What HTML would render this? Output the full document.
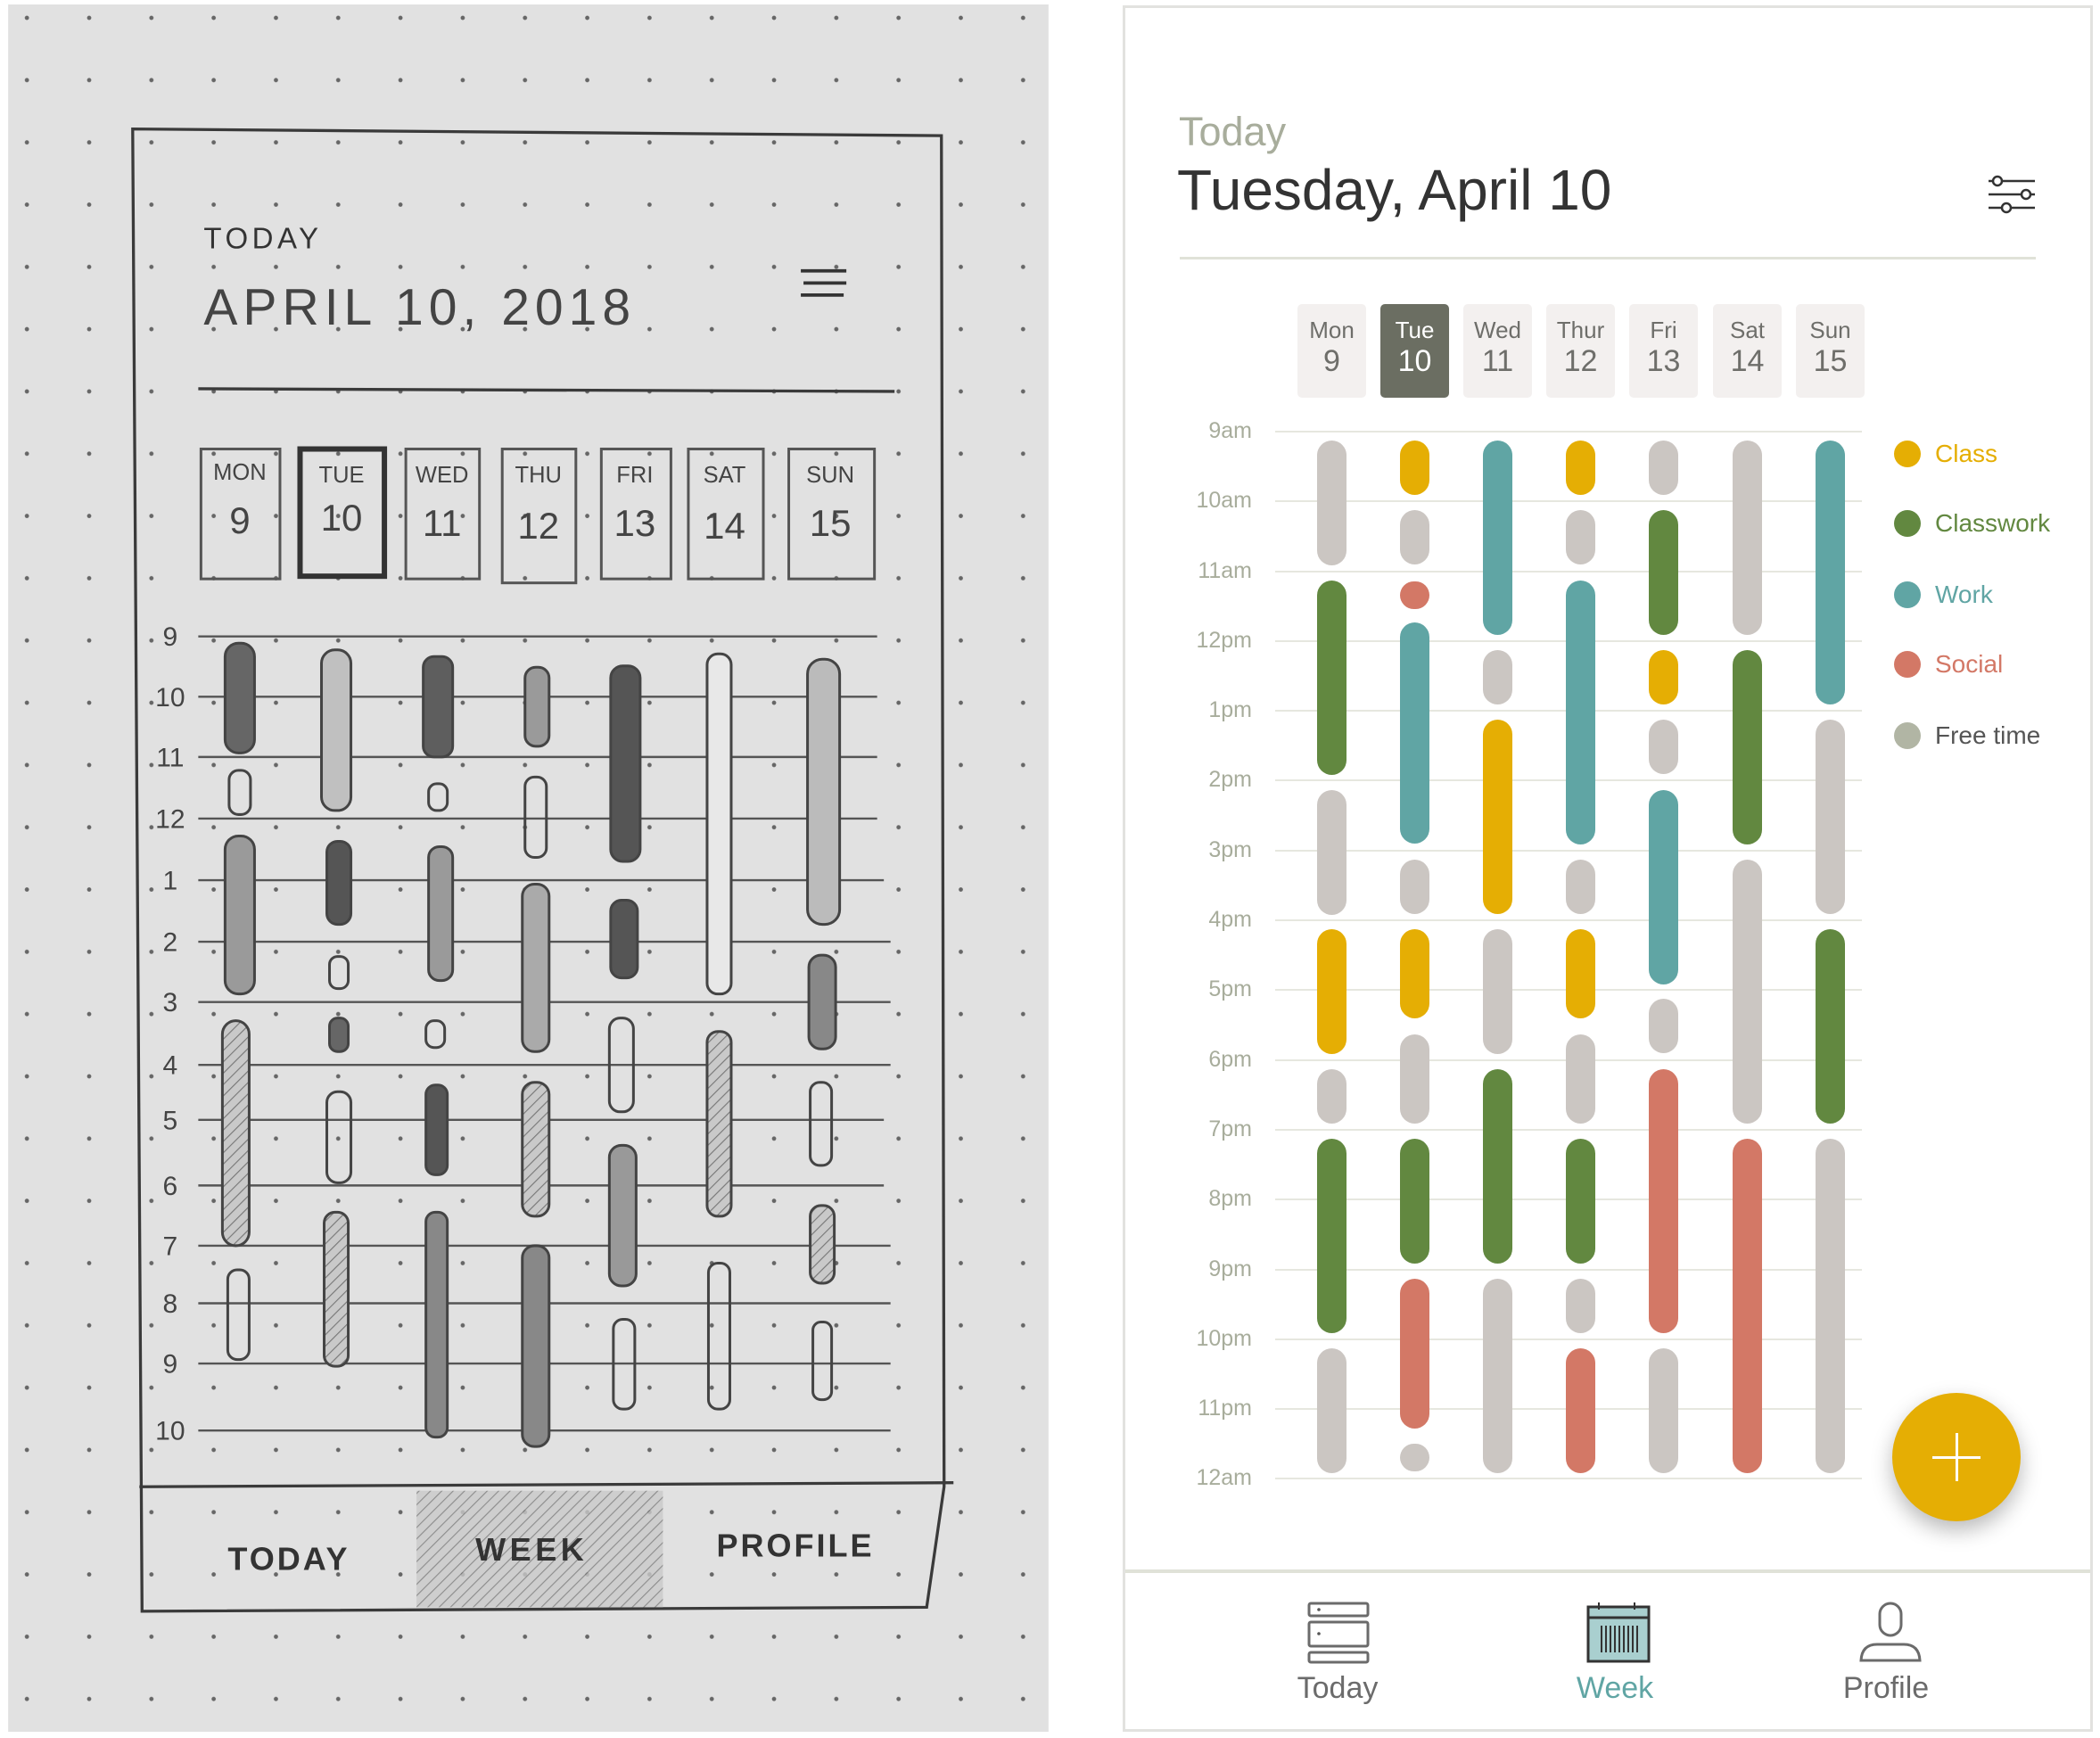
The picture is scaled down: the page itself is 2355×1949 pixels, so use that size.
<!DOCTYPE html>
<html><head><meta charset="utf-8"><style>
*{margin:0;padding:0;box-sizing:border-box}
body{width:2355px;height:1949px;position:relative;background:#fff;font-family:"Liberation Sans",sans-serif;overflow:hidden}
.a{position:absolute}
.panel{left:1259px;top:6px;width:1088px;height:1936px;border:3px solid #e2e2df}
.chip{position:absolute;top:341px;width:77px;height:105px;background:#f3f0ef;border-radius:5px;text-align:center;color:#6e6e6a}
.chip .d{font-size:26px;margin-top:14px;line-height:30px}
.chip .n{font-size:34px;line-height:40px}
.chip.on{background:#6b6e62;color:#fff}
.hl{position:absolute;left:1430px;width:658px;height:2px;background:#e6e7df}
.hr{position:absolute;right:951px;font-size:25px;color:#a8ad9c;line-height:30px;margin-top:-16px}
.b{position:absolute;width:33px;border-radius:17px}
.c1{left:1477px}.c2{left:1570px}.c3{left:1663px}.c4{left:1756px}.c5{left:1849px}.c6{left:1943px}.c7{left:2036px}
.g{background:#cbc6c2}.y{background:#e5ae04}.gr{background:#628840}.t{background:#60a5a4}.r{background:#d37866}
.lg{position:absolute;left:2124px;font-size:28px;line-height:32px}
.lg i{display:inline-block;width:30px;height:30px;border-radius:50%;vertical-align:middle;margin-right:16px;margin-top:-4px}
.nav{position:absolute;font-size:34px;top:1874px;width:300px;text-align:center;color:#6b6b6b}
</style></head><body>

<svg class="a" style="left:9px;top:5px" width="1167" height="1937" viewBox="6 3 777 1290" xmlns="http://www.w3.org/2000/svg">
<defs><pattern id="dp" x="10" y="5" width="46.5" height="46.5" patternUnits="userSpaceOnUse"><circle cx="10" cy="8" r="1.6" fill="#666"/></pattern>
<pattern id="hp" width="6" height="6" patternUnits="userSpaceOnUse" patternTransform="rotate(45)"><rect width="6" height="6" fill="#c9c9c9"/><line x1="0" y1="0" x2="0" y2="6" stroke="#777" stroke-width="1.5"/></pattern></defs>
<rect x="6" y="3" width="777" height="1290" fill="#e1e1e1"/>
<rect x="6" y="3" width="777" height="1290" fill="url(#dp)"/>
<g fill="none" stroke="#3a3a3a" stroke-width="2.2">
<path d="M99 96 L703 101 L705 1110 L692 1200 L106 1203 Z"/>
<path d="M104 1110 L712 1107"/>
<path d="M148 290 L668 292"/>
</g>
<rect x="311" y="1113" width="184" height="87" fill="url(#hp)" opacity=".8"/>
<g font-family="Liberation Sans" fill="#333">
<text x="152" y="185" font-size="22" letter-spacing="3">TODAY</text>
<text x="152" y="242" font-size="38" letter-spacing="4" fill="#444">APRIL 10, 2018</text>
<text x="170" y="1172" font-size="24" font-weight="bold" letter-spacing="2">TODAY</text>
<text x="355" y="1165" font-size="24" font-weight="bold" letter-spacing="3">WEEK</text>
<text x="535" y="1162" font-size="24" font-weight="bold" letter-spacing="2">PROFILE</text>
</g>
<g stroke="#333" stroke-width="2.5"><path d="M598 202h34M600 211h32M598 220h32"/></g>
<g fill="none" stroke="#555" stroke-width="2">
<rect x="150" y="335" width="59" height="97"/><rect x="224" y="335" width="63" height="95" stroke-width="4" stroke="#333"/>
<rect x="303" y="335" width="55" height="97"/><rect x="375" y="335" width="55" height="100"/>
<rect x="449" y="335" width="52" height="97"/><rect x="514" y="335" width="56" height="97"/><rect x="589" y="335" width="64" height="97"/>
</g>
<g font-family="Liberation Sans" fill="#444" text-anchor="middle">
<g font-size="17"><text x="179" y="358">MON</text><text x="255" y="360">TUE</text><text x="330" y="360">WED</text><text x="402" y="360">THU</text><text x="474" y="360">FRI</text><text x="541" y="360">SAT</text><text x="620" y="360">SUN</text></g>
<g font-size="28"><text x="179" y="398">9</text><text x="255" y="396">10</text><text x="330" y="400">11</text><text x="402" y="402">12</text><text x="474" y="400">13</text><text x="541" y="402">14</text><text x="620" y="400">15</text></g>
<g font-size="20"><text x="127" y="482">9</text><text x="127" y="527">10</text><text x="127" y="572">11</text><text x="127" y="618">12</text><text x="127" y="664">1</text><text x="127" y="710">2</text><text x="127" y="755">3</text><text x="127" y="802">4</text><text x="127" y="843">5</text><text x="127" y="892">6</text><text x="127" y="937">7</text><text x="127" y="980">8</text><text x="127" y="1025">9</text><text x="127" y="1075">10</text></g>
</g>
<g stroke="#555" stroke-width="1.6">
<path d="M148 475H655M148 520H655M148 565H655M148 611H655M148 657H660M148 703H665M148 748H665M148 795H665M148 836H660M148 885H660M148 930H665M148 973H665M148 1018H665M148 1068H665"/>
</g>
<g stroke="#444" stroke-width="2">
<rect x="168" y="480" width="22" height="82" rx="10" fill="#666"/>
<rect x="171" y="575" width="16" height="33" rx="7" fill="none"/>
<rect x="168" y="624" width="22" height="118" rx="10" fill="#9a9a9a"/>
<rect x="166" y="762" width="20" height="168" rx="10" fill="url(#hp)"/>
<rect x="170" y="948" width="16" height="67" rx="7" fill="none"/>
<rect x="240" y="485" width="22" height="120" rx="10" fill="#c0c0c0"/>
<rect x="244" y="628" width="18" height="62" rx="8" fill="#555"/>
<rect x="246" y="714" width="14" height="24" rx="6" fill="none"/>
<rect x="246" y="760" width="14" height="25" rx="6" fill="#666"/>
<rect x="244" y="815" width="18" height="68" rx="8" fill="none"/>
<rect x="242" y="905" width="18" height="115" rx="8" fill="url(#hp)"/>
<rect x="316" y="490" width="22" height="75" rx="8" fill="#5e5e5e"/>
<rect x="320" y="585" width="14" height="20" rx="6" fill="none"/>
<rect x="320" y="632" width="18" height="100" rx="8" fill="#9a9a9a"/>
<rect x="318" y="762" width="14" height="20" rx="6" fill="none"/>
<rect x="318" y="810" width="16" height="67" rx="7" fill="#555"/>
<rect x="318" y="905" width="16" height="168" rx="7" fill="#888"/>
<rect x="392" y="498" width="18" height="59" rx="8" fill="#9a9a9a"/>
<rect x="392" y="580" width="16" height="60" rx="7" fill="none"/>
<rect x="390" y="660" width="20" height="125" rx="9" fill="#aaa"/>
<rect x="390" y="808" width="20" height="100" rx="9" fill="url(#hp)"/>
<rect x="390" y="930" width="20" height="150" rx="9" fill="#888"/>
<rect x="456" y="497" width="22" height="146" rx="9" fill="#555"/>
<rect x="456" y="672" width="20" height="58" rx="8" fill="#555"/>
<rect x="455" y="760" width="18" height="70" rx="8" fill="none"/>
<rect x="455" y="855" width="20" height="105" rx="9" fill="#999"/>
<rect x="458" y="985" width="16" height="67" rx="7" fill="none"/>
<rect x="528" y="488" width="18" height="254" rx="8" fill="#e8e8e8"/>
<rect x="528" y="770" width="18" height="138" rx="8" fill="url(#hp)"/>
<rect x="529" y="943" width="16" height="109" rx="7" fill="none"/>
<rect x="603" y="492" width="24" height="198" rx="11" fill="#bbb"/>
<rect x="604" y="713" width="20" height="70" rx="9" fill="#888"/>
<rect x="605" y="808" width="16" height="62" rx="7" fill="none"/>
<rect x="605" y="900" width="18" height="58" rx="8" fill="url(#hp)"/>
<rect x="607" y="987" width="14" height="58" rx="6" fill="none"/>
</g>
</svg>

<div class="a panel"></div>
<div class="a" style="left:1322px;top:122px;font-size:45px;color:#a8ad9c">Today</div>
<div class="a" style="left:1320px;top:176px;font-size:64px;color:#333">Tuesday, April 10</div>
<svg class="a" style="left:2228px;top:196px" width="56" height="44" viewBox="0 0 56 44"><g stroke="#333" stroke-width="2.5" fill="#fff"><path d="M2 7H54M2 22H54M2 37H54"/><circle cx="12" cy="7" r="5"/><circle cx="44" cy="22" r="5"/><circle cx="22" cy="37" r="5"/></g></svg>
<div class="a" style="left:1323px;top:288px;width:960px;height:3px;background:#e0e2d8"></div>

<div class="chip" style="left:1455px"><div class="d">Mon</div><div class="n">9</div></div>
<div class="chip on" style="left:1548px"><div class="d">Tue</div><div class="n">10</div></div>
<div class="chip" style="left:1641px"><div class="d">Wed</div><div class="n">11</div></div>
<div class="chip" style="left:1734px"><div class="d">Thur</div><div class="n">12</div></div>
<div class="chip" style="left:1827px"><div class="d">Fri</div><div class="n">13</div></div>
<div class="chip" style="left:1921px"><div class="d">Sat</div><div class="n">14</div></div>
<div class="chip" style="left:2014px"><div class="d">Sun</div><div class="n">15</div></div>

<div class="hl" style="top:483px"></div><div class="hl" style="top:561px"></div><div class="hl" style="top:640px"></div><div class="hl" style="top:718px"></div><div class="hl" style="top:796px"></div><div class="hl" style="top:874px"></div><div class="hl" style="top:953px"></div><div class="hl" style="top:1031px"></div><div class="hl" style="top:1109px"></div><div class="hl" style="top:1188px"></div><div class="hl" style="top:1266px"></div><div class="hl" style="top:1344px"></div><div class="hl" style="top:1423px"></div><div class="hl" style="top:1501px"></div><div class="hl" style="top:1579px"></div><div class="hl" style="top:1657px"></div>
<div class="hr" style="top:484px">9am</div><div class="hr" style="top:562px">10am</div><div class="hr" style="top:641px">11am</div><div class="hr" style="top:719px">12pm</div><div class="hr" style="top:797px">1pm</div><div class="hr" style="top:875px">2pm</div><div class="hr" style="top:954px">3pm</div><div class="hr" style="top:1032px">4pm</div><div class="hr" style="top:1110px">5pm</div><div class="hr" style="top:1189px">6pm</div><div class="hr" style="top:1267px">7pm</div><div class="hr" style="top:1345px">8pm</div><div class="hr" style="top:1424px">9pm</div><div class="hr" style="top:1502px">10pm</div><div class="hr" style="top:1580px">11pm</div><div class="hr" style="top:1658px">12am</div>

<!-- Mon -->
<div class="b c1 g" style="top:494px;height:140px"></div>
<div class="b c1 gr" style="top:651px;height:218px"></div>
<div class="b c1 g" style="top:886px;height:140px"></div>
<div class="b c1 y" style="top:1042px;height:140px"></div>
<div class="b c1 g" style="top:1199px;height:61px"></div>
<div class="b c1 gr" style="top:1277px;height:218px"></div>
<div class="b c1 g" style="top:1512px;height:140px"></div>
<!-- Tue -->
<div class="b c2 y" style="top:494px;height:61px"></div>
<div class="b c2 g" style="top:572px;height:61px"></div>
<div class="b c2 r" style="top:652px;height:31px"></div>
<div class="b c2 t" style="top:698px;height:248px"></div>
<div class="b c2 g" style="top:964px;height:61px"></div>
<div class="b c2 y" style="top:1042px;height:100px"></div>
<div class="b c2 g" style="top:1160px;height:100px"></div>
<div class="b c2 gr" style="top:1277px;height:140px"></div>
<div class="b c2 r" style="top:1434px;height:168px"></div>
<div class="b c2 g" style="top:1619px;height:31px"></div>
<!-- Wed -->
<div class="b c3 t" style="top:494px;height:218px"></div>
<div class="b c3 g" style="top:729px;height:61px"></div>
<div class="b c3 y" style="top:807px;height:218px"></div>
<div class="b c3 g" style="top:1042px;height:140px"></div>
<div class="b c3 gr" style="top:1199px;height:218px"></div>
<div class="b c3 g" style="top:1434px;height:218px"></div>
<!-- Thur -->
<div class="b c4 y" style="top:494px;height:61px"></div>
<div class="b c4 g" style="top:572px;height:61px"></div>
<div class="b c4 t" style="top:651px;height:296px"></div>
<div class="b c4 g" style="top:964px;height:61px"></div>
<div class="b c4 y" style="top:1042px;height:100px"></div>
<div class="b c4 g" style="top:1160px;height:100px"></div>
<div class="b c4 gr" style="top:1277px;height:140px"></div>
<div class="b c4 g" style="top:1434px;height:61px"></div>
<div class="b c4 r" style="top:1512px;height:140px"></div>
<!-- Fri -->
<div class="b c5 g" style="top:494px;height:61px"></div>
<div class="b c5 gr" style="top:572px;height:140px"></div>
<div class="b c5 y" style="top:729px;height:61px"></div>
<div class="b c5 g" style="top:807px;height:61px"></div>
<div class="b c5 t" style="top:886px;height:218px"></div>
<div class="b c5 g" style="top:1120px;height:61px"></div>
<div class="b c5 r" style="top:1199px;height:296px"></div>
<div class="b c5 g" style="top:1512px;height:140px"></div>
<!-- Sat -->
<div class="b c6 g" style="top:494px;height:218px"></div>
<div class="b c6 gr" style="top:729px;height:218px"></div>
<div class="b c6 g" style="top:964px;height:296px"></div>
<div class="b c6 r" style="top:1277px;height:375px"></div>
<!-- Sun -->
<div class="b c7 t" style="top:494px;height:296px"></div>
<div class="b c7 g" style="top:807px;height:218px"></div>
<div class="b c7 gr" style="top:1042px;height:218px"></div>
<div class="b c7 g" style="top:1277px;height:375px"></div>

<div class="lg" style="top:493px;color:#e5ae04"><i style="background:#e5ae04"></i>Class</div>
<div class="lg" style="top:571px;color:#628840"><i style="background:#628840"></i>Classwork</div>
<div class="lg" style="top:651px;color:#60a5a4"><i style="background:#60a5a4"></i>Work</div>
<div class="lg" style="top:729px;color:#d37866"><i style="background:#d37866"></i>Social</div>
<div class="lg" style="top:809px;color:#555"><i style="background:#b1b5a4"></i>Free time</div>

<div class="a" style="left:2122px;top:1562px;width:144px;height:144px;border-radius:50%;background:#e5ae04;box-shadow:0 10px 24px rgba(0,0,0,.28)"></div>
<div class="a" style="left:2167px;top:1633px;width:54px;height:3px;background:#fff"></div>
<div class="a" style="left:2193px;top:1607px;width:3px;height:54px;background:#fff"></div>

<div class="a" style="left:1262px;top:1760px;width:1082px;height:4px;background:#e0e2d8"></div>
<svg class="a" style="left:1462px;top:1794px" width="80" height="76" viewBox="0 0 80 76"><g fill="none" stroke="#6b6b6b" stroke-width="3"><rect x="6" y="4" width="66" height="14" rx="2"/><rect x="6" y="25" width="66" height="27" rx="2"/><rect x="6" y="59" width="66" height="11" rx="2"/></g><circle cx="17" cy="11" r="1.8" fill="#555"/><circle cx="17" cy="38" r="1.8" fill="#555"/></svg>
<svg class="a" style="left:1776px;top:1794px" width="80" height="76" viewBox="0 0 80 76"><rect x="5" y="8" width="68" height="61" fill="#a9cfcf" stroke="#333" stroke-width="3"/><path d="M5 20H73" stroke="#333" stroke-width="3"/><path d="M17 3v8M57 3v8" stroke="#333" stroke-width="2"/><g stroke="#333" stroke-width="2"><path d="M20 29v30M25 29v30M30 29v30M35 29v30M40 29v30M45 29v30M50 29v30M55 29v30M60 29v30"/></g></svg>
<svg class="a" style="left:2080px;top:1794px" width="80" height="76" viewBox="0 0 80 76"><g fill="none" stroke="#6b6b6b" stroke-width="3"><rect x="28" y="4" width="24" height="36" rx="12"/><path d="M7 68 Q8 50 25 50 H55 Q72 50 73 68 Z"/></g></svg>
<div class="nav" style="left:1350px">Today</div>
<div class="nav" style="left:1661px;color:#60a5a4">Week</div>
<div class="nav" style="left:1965px">Profile</div>
</body></html>
